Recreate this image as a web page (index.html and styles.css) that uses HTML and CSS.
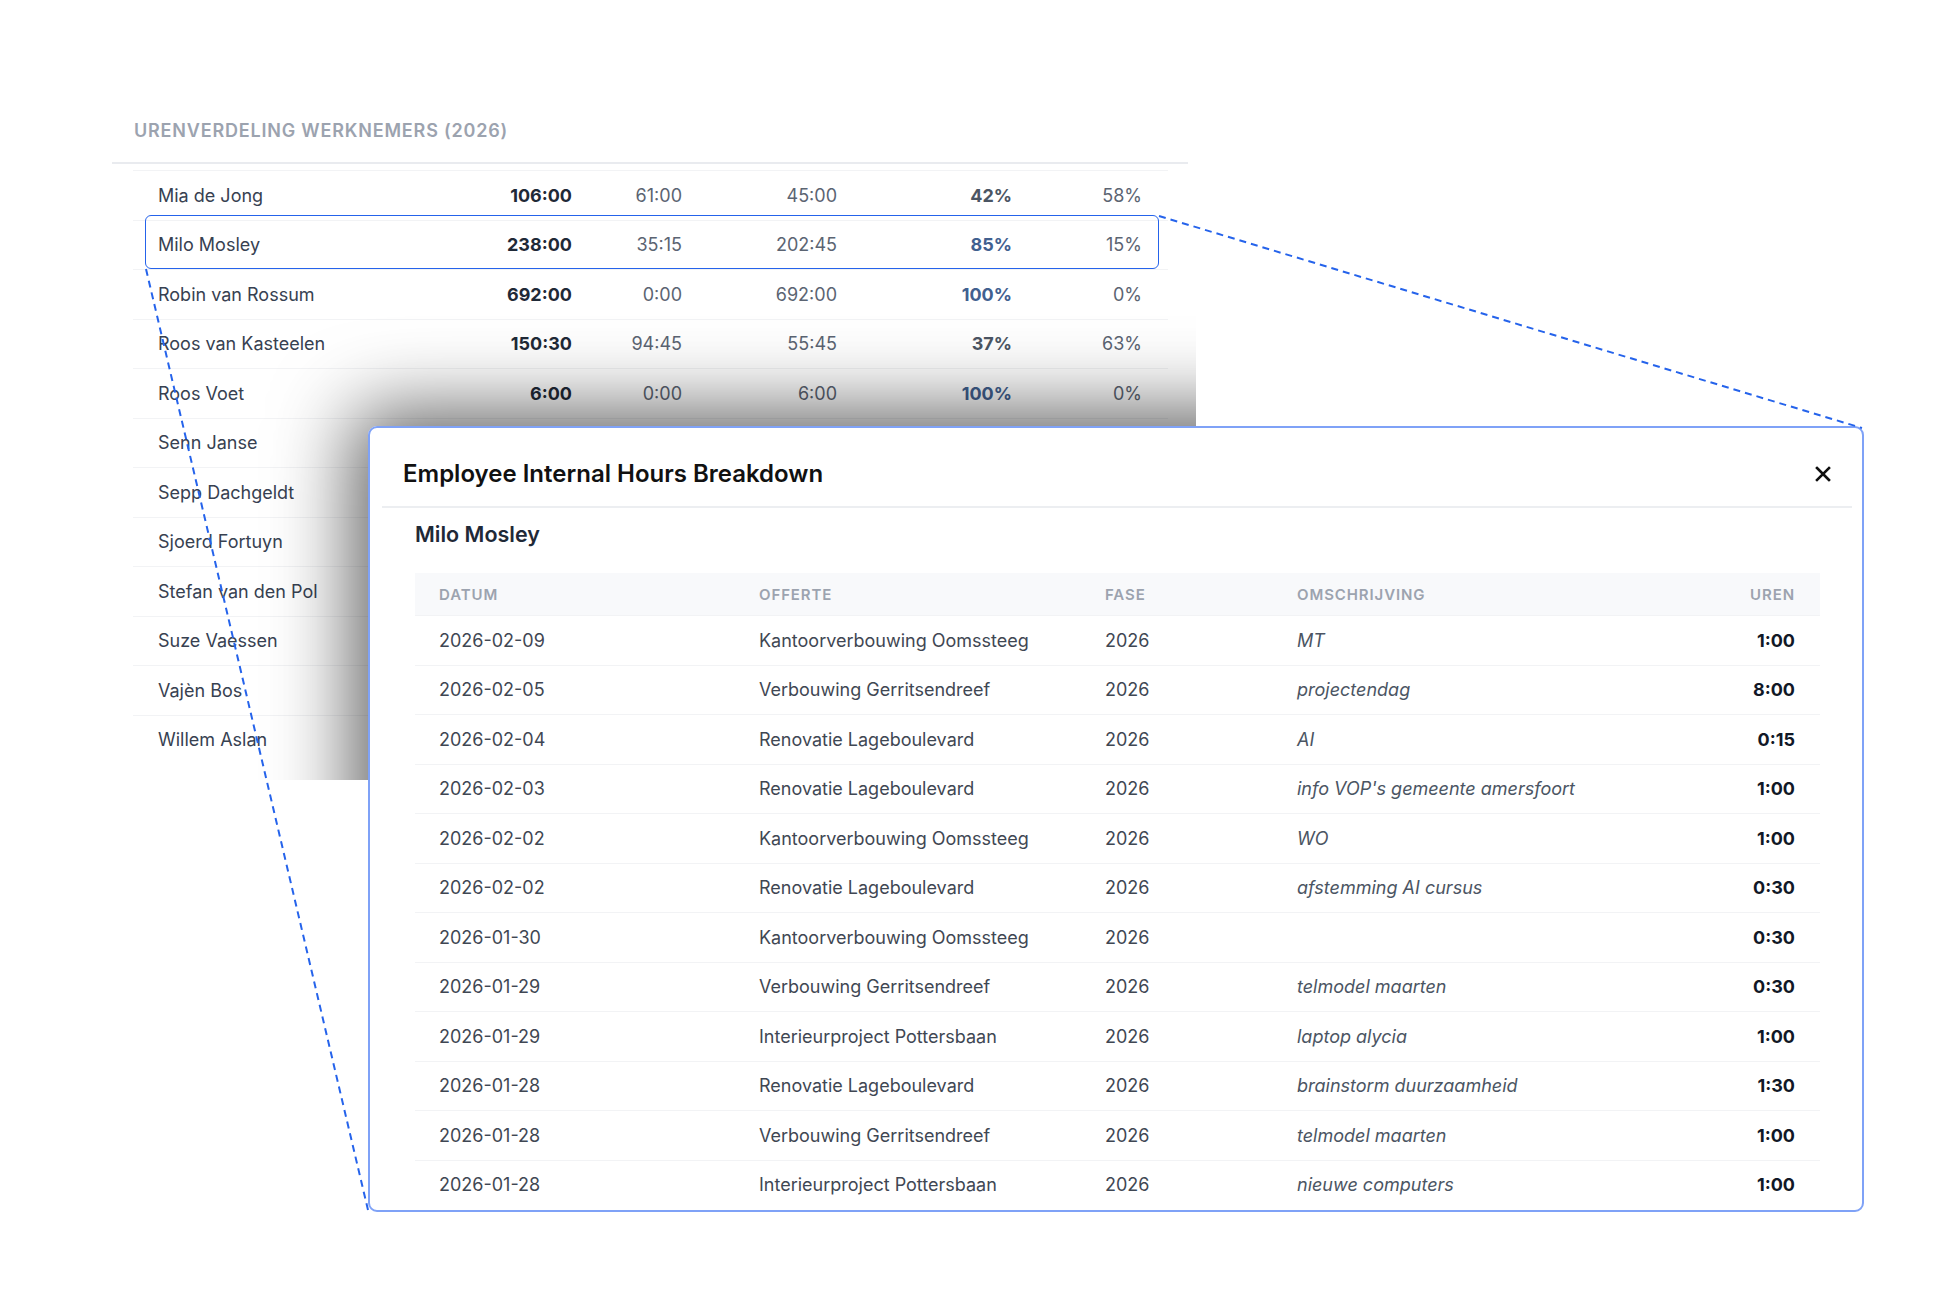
FILE: index.html
```html
<!DOCTYPE html>
<html lang="nl">
<head>
<meta charset="utf-8">
<title>Urenverdeling werknemers</title>
<link rel="stylesheet" href="styles.css">
</head>
<body>
<div class="page">
  <section class="panel">
    <h2 class="panel-title">Urenverdeling werknemers (2026)</h2>
    <div class="emp-table">
      <div class="emp-row"><span class="name">Mia de Jong</span><span class="num total">106:00</span><span class="num">61:00</span><span class="num">45:00</span><span class="num pct">42%</span><span class="num">58%</span></div>
      <div class="emp-row selected"><span class="name">Milo Mosley</span><span class="num total">238:00</span><span class="num">35:15</span><span class="num">202:45</span><span class="num pct hi">85%</span><span class="num">15%</span></div>
      <div class="emp-row"><span class="name">Robin van Rossum</span><span class="num total">692:00</span><span class="num">0:00</span><span class="num">692:00</span><span class="num pct hi">100%</span><span class="num">0%</span></div>
      <div class="emp-row"><span class="name">Roos van Kasteelen</span><span class="num total">150:30</span><span class="num">94:45</span><span class="num">55:45</span><span class="num pct">37%</span><span class="num">63%</span></div>
      <div class="emp-row"><span class="name">Roos Voet</span><span class="num total">6:00</span><span class="num">0:00</span><span class="num">6:00</span><span class="num pct hi">100%</span><span class="num">0%</span></div>
      <div class="emp-row"><span class="name">Senn Janse</span></div>
      <div class="emp-row"><span class="name">Sepp Dachgeldt</span></div>
      <div class="emp-row"><span class="name">Sjoerd Fortuyn</span></div>
      <div class="emp-row"><span class="name">Stefan van den Pol</span></div>
      <div class="emp-row"><span class="name">Suze Vaessen</span></div>
      <div class="emp-row"><span class="name">Vajèn Bos</span></div>
      <div class="emp-row"><span class="name">Willem Aslan</span></div>
    </div>
    <div class="shade"></div>
  </section>

  <div class="modal">
    <div class="modal-header">
      <h1 class="modal-title">Employee Internal Hours Breakdown</h1>
      <svg class="close" width="16" height="16" viewBox="0 0 16 16" aria-label="Sluiten"><path d="M2 2 L14 14 M14 2 L2 14" stroke="#111" stroke-width="2.6" stroke-linecap="square" fill="none"/></svg>
    </div>
    <div class="modal-body">
      <h3 class="emp-name">Milo Mosley</h3>
      <div class="hours-table">
        <div class="h-row head"><span>Datum</span><span>Offerte</span><span>Fase</span><span>Omschrijving</span><span class="r">Uren</span></div>
        <div class="h-row"><span>2026-02-09</span><span>Kantoorverbouwing Oomssteeg</span><span>2026</span><span class="desc">MT</span><span class="r hrs">1:00</span></div>
        <div class="h-row"><span>2026-02-05</span><span>Verbouwing Gerritsendreef</span><span>2026</span><span class="desc">projectendag</span><span class="r hrs">8:00</span></div>
        <div class="h-row"><span>2026-02-04</span><span>Renovatie Lageboulevard</span><span>2026</span><span class="desc">AI</span><span class="r hrs">0:15</span></div>
        <div class="h-row"><span>2026-02-03</span><span>Renovatie Lageboulevard</span><span>2026</span><span class="desc">info VOP's gemeente amersfoort</span><span class="r hrs">1:00</span></div>
        <div class="h-row"><span>2026-02-02</span><span>Kantoorverbouwing Oomssteeg</span><span>2026</span><span class="desc">WO</span><span class="r hrs">1:00</span></div>
        <div class="h-row"><span>2026-02-02</span><span>Renovatie Lageboulevard</span><span>2026</span><span class="desc">afstemming AI cursus</span><span class="r hrs">0:30</span></div>
        <div class="h-row"><span>2026-01-30</span><span>Kantoorverbouwing Oomssteeg</span><span>2026</span><span class="desc"></span><span class="r hrs">0:30</span></div>
        <div class="h-row"><span>2026-01-29</span><span>Verbouwing Gerritsendreef</span><span>2026</span><span class="desc">telmodel maarten</span><span class="r hrs">0:30</span></div>
        <div class="h-row"><span>2026-01-29</span><span>Interieurproject Pottersbaan</span><span>2026</span><span class="desc">laptop alycia</span><span class="r hrs">1:00</span></div>
        <div class="h-row"><span>2026-01-28</span><span>Renovatie Lageboulevard</span><span>2026</span><span class="desc">brainstorm duurzaamheid</span><span class="r hrs">1:30</span></div>
        <div class="h-row"><span>2026-01-28</span><span>Verbouwing Gerritsendreef</span><span>2026</span><span class="desc">telmodel maarten</span><span class="r hrs">1:00</span></div>
        <div class="h-row"><span>2026-01-28</span><span>Interieurproject Pottersbaan</span><span>2026</span><span class="desc">nieuwe computers</span><span class="r hrs">1:00</span></div>
      </div>
    </div>
  </div>

  <svg class="connectors" width="1960" height="1308" viewBox="0 0 1960 1308">
    <line x1="1159" y1="216" x2="1862" y2="428" stroke="#2563eb" stroke-width="2" stroke-dasharray="7 5"/>
    <line x1="146" y1="269" x2="368" y2="1210" stroke="#2563eb" stroke-width="2" stroke-dasharray="7 5"/>
  </svg>
</div>
</body>
</html>
```
FILE: styles.css
```css
* { box-sizing: border-box; }

html, body {
  margin: 0;
  padding: 0;
  background: #ffffff;
}

body {
  font-family: Inter, "Noto Sans", "Liberation Sans", sans-serif;
  color: #374151;
}

.page {
  position: relative;
  width: 1960px;
  height: 1308px;
  overflow: hidden;
}

/* ---------- background panel ---------- */
.panel {
  position: relative;
  width: 1084px;
  height: 780px;
  margin-left: 112px;
  padding-top: 96px;
  overflow: hidden;
}

.panel-title {
  width: 1076px;
  margin: 0;
  padding: 23px 0 19px 22px;
  font-size: 18px;
  line-height: 24px;
  font-weight: 600;
  letter-spacing: 0.045em;
  text-transform: uppercase;
  color: #9ca3af;
  border-bottom: 2px solid #e9ebef;
}

.emp-table {
  width: 1035px;
  margin: 6px 0 0 21px;
}

.emp-row {
  position: relative;
  display: grid;
  grid-template-columns: 294px 120px 110px 155px 175px 130px;
  align-items: center;
  height: 49.5px;
  padding: 0 26px 0 25px;
  border-top: 1px solid #f2f3f5;
  font-size: 18px;
  color: #5b6472;
}

.emp-row .name { color: #374151; }
.emp-row .num { text-align: right; }
.emp-row .total { font-weight: 700; color: #1f2937; }
.emp-row .pct { font-weight: 700; color: #4b5563; }
.emp-row .pct.hi { color: #41608f; }

.emp-row.selected::after {
  content: "";
  position: absolute;
  top: -6px;
  bottom: 0;
  left: 12px;
  right: 9px;
  border: 1.5px solid #2563eb;
  border-radius: 6px;
}

.shade {
  position: absolute;
  left: 256px;
  top: 426px;
  width: 1496px;
  height: 786px;
  border-radius: 9px;
  box-shadow: 0 0 80px 15px rgba(0, 0, 0, 0.62);
}

/* ---------- modal ---------- */
.modal {
  position: absolute;
  left: 368px;
  top: 426px;
  width: 1496px;
  height: 786px;
  background: #ffffff;
  border: 2px solid #7fa2f7;
  border-radius: 9px;
  overflow: hidden;
}

.modal-header {
  display: flex;
  justify-content: space-between;
  align-items: center;
  margin: 0 10px 0 12px;
  padding: 32px 21px 18px 21px;
  border-bottom: 2px solid #eceef1;
}

.modal-title {
  margin: 0;
  font-size: 24px;
  line-height: 28px;
  font-weight: 600;
  color: #111111;
}

.close { display: block; }

.modal-body {
  padding: 12px 42px 0 45px;
}

.emp-name {
  margin: 0 0 25px 0;
  font-size: 21.5px;
  line-height: 28px;
  font-weight: 600;
  color: #1f2937;
}

.h-row {
  display: grid;
  grid-template-columns: 320px 346px 192px 1fr 120px;
  align-items: center;
  height: 49.5px;
  padding: 0 25px 0 24px;
  border-top: 1px solid #f2f3f5;
  font-size: 18px;
  color: #3f4753;
}

.h-row.head {
  height: 42px;
  border-top: none;
  background: #f8f9fb;
  font-size: 15px;
  font-weight: 600;
  letter-spacing: 0.06em;
  text-transform: uppercase;
  color: #9ca3af;
}

.h-row .r { text-align: right; }
.h-row .desc { font-style: italic; color: #4b5563; }
.h-row .hrs { font-weight: 700; color: #111827; }

/* ---------- connector lines ---------- */
.connectors {
  position: absolute;
  left: 0;
  top: 0;
  pointer-events: none;
}
```
